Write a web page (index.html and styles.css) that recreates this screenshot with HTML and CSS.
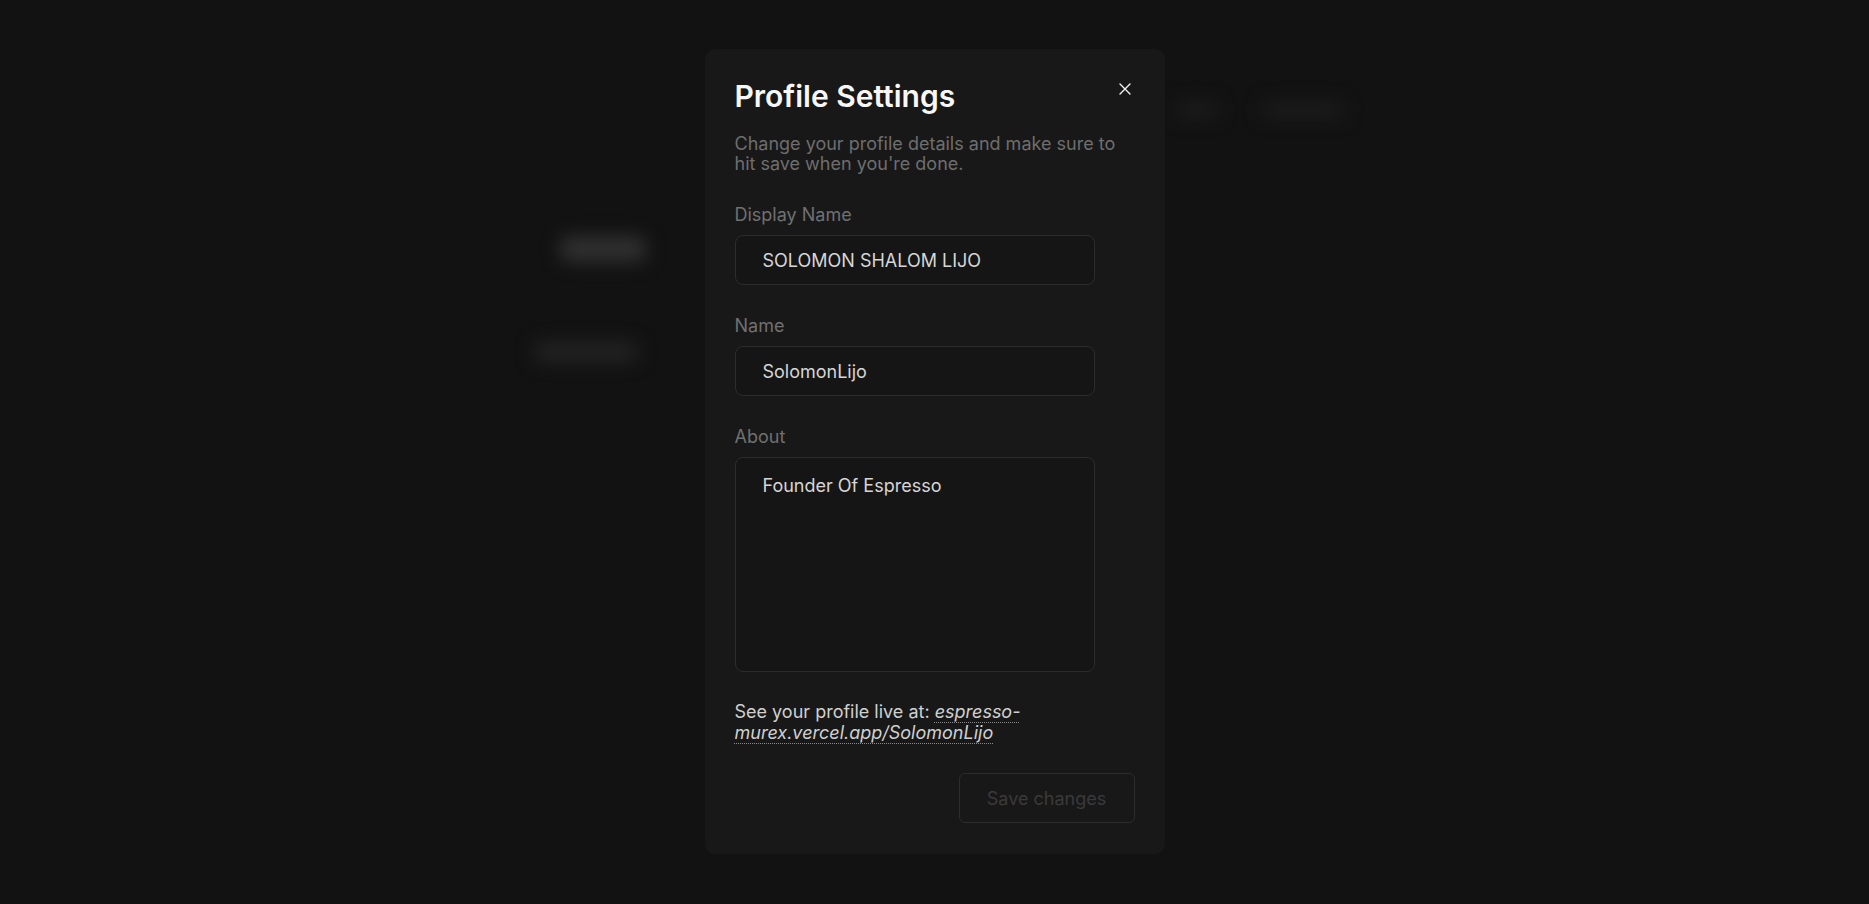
FILE: index.html
```html
<!DOCTYPE html>
<html lang="en">
<head>
<meta charset="utf-8">
<title>Profile Settings</title>
<link rel="stylesheet" href="styles.css">
</head>
<body>
<div class="page" aria-hidden="true">
  <nav class="nav">
    <span class="nav-item w1"></span>
    <span class="nav-item w2"></span>
  </nav>
  <section class="profile">
    <div class="blob b1"></div>
    <div class="blob b2"></div>
  </section>
</div>

<div class="overlay">
  <div class="dialog" role="dialog" aria-labelledby="dlg-title">
    <button class="close" aria-label="Close">
      <svg width="12" height="12" viewBox="0 0 12 12"><path d="M1 1L11 11M11 1L1 11" stroke="#f2f2f2" stroke-width="1.4" stroke-linecap="round"/></svg>
    </button>
    <h2 id="dlg-title" class="title">Profile Settings</h2>
    <p class="desc">Change your profile details and make sure to hit save when you're done.</p>
    <form class="form">
      <div class="field">
        <label class="label" for="dn">Display Name</label>
        <input class="input" id="dn" value="SOLOMON SHALOM LIJO">
      </div>
      <div class="field">
        <label class="label" for="nm">Name</label>
        <input class="input" id="nm" value="SolomonLijo">
      </div>
      <div class="field last">
        <label class="label" for="ab">About</label>
        <textarea class="input area" id="ab">Founder Of Espresso</textarea>
      </div>
      <p class="live">See your profile live at: <a class="link" href="#">espresso-murex.vercel.app/SolomonLijo</a></p>
      <div class="actions">
        <button type="button" class="save" disabled>Save changes</button>
      </div>
    </form>
  </div>
</div>
</body>
</html>
```

FILE: styles.css
```css
* { box-sizing: border-box; }
html, body {
  margin: 0;
  height: 100%;
  background: #121212;
  font-family: Inter, "Noto Sans", sans-serif;
  overflow: hidden;
}
.page {
  height: 100%;
  filter: blur(9px);
}
.nav {
  display: flex;
  gap: 44px;
  padding: 102px 0 0 1176px;
}
.nav-item {
  display: block;
  height: 16px;
  border-radius: 4px;
  background: #1c1c1c;
}
.nav-item.w1 { width: 42px; }
.nav-item.w2 { width: 82px; }
.profile {
  display: flex;
  flex-direction: column;
  padding: 118px 0 0 534px;
  gap: 80px;
}
.blob {
  border-radius: 8px;
}
.b1 {
  margin-left: 26px;
  width: 86px;
  height: 26px;
  background: #303030;
}
.b2 {
  width: 104px;
  height: 20px;
  background: #232323;
}
.overlay {
  position: fixed;
  inset: 0;
  display: flex;
  justify-content: center;
  align-items: flex-start;
  padding-top: 49px;
}
.dialog {
  position: relative;
  width: 460px;
  height: 805px;
  background: #181818;
  border-radius: 10px;
  padding: 29px 30px;
  color: #f2f2f2;
}
.close {
  position: absolute;
  top: 34px;
  right: 34px;
  width: 12px;
  height: 12px;
  padding: 0;
  border: 0;
  background: none;
  cursor: pointer;
  display: flex;
}
.title {
  margin: 0;
  font-size: 30px;
  line-height: 36px;
  font-weight: 600;
  color: #f7f7f7;
}
.desc {
  margin: 20px 0 0;
  font-size: 18px;
  line-height: 20px;
  color: #6e6e6e;
  width: 400px;
}
.form {
  display: flex;
  flex-direction: column;
  margin-top: 29px;
}
.field {
  display: flex;
  flex-direction: column;
  gap: 8px;
  margin-bottom: 29px;
}
.field.last { margin-bottom: 29px; }
.label {
  font-size: 18px;
  line-height: 24px;
  color: #707070;
}
.input {
  width: 360px;
  height: 50px;
  background: #151515;
  border: 1px solid #2c2c2c;
  border-radius: 8px;
  padding: 0 27px;
  font: inherit;
  font-size: 18px;
  color: #d6d6d6;
  outline: none;
}
.area {
  height: 215px;
  padding: 16px 27px;
  line-height: 24px;
  resize: none;
}
.live {
  margin: 0;
  width: 360px;
  font-size: 18px;
  line-height: 21px;
  color: #d0d0d0;
}
.link {
  color: #d0d0d0;
  font-style: italic;
  text-decoration: underline dotted #8a8a8a;
  text-underline-offset: 4px;
  text-decoration-thickness: 1px;
}
.actions {
  display: flex;
  justify-content: flex-end;
  margin-top: 30px;
}
.save {
  width: 176px;
  height: 50px;
  border: 1px solid #2c2c2c;
  border-radius: 6px;
  background: transparent;
  font: inherit;
  font-size: 18px;
  color: #3a3a3a;
}
```
